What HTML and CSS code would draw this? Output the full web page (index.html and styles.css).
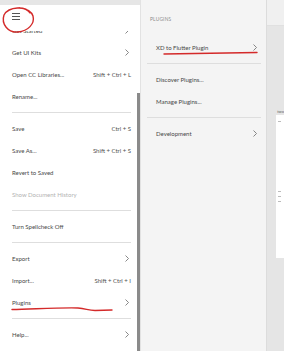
FILE: index.html
```html
<!DOCTYPE html>
<html lang="en">
<head>
    <meta charset="UTF-8">
    <meta name="viewport" content="width=device-width, initial-scale=1.0">
    <title>XD Menu - Plugins</title>
    <link rel="stylesheet" href="styles.css">
</head>
<body>

    <div class="menu">
        <div class="menu-strip"></div>
        <div class="menu-body">
            <div class="menu-main">
                <div class="menu-head">
                    <span class="burger"><i></i><i></i><i></i></span>
                </div>
                <div class="menu-list">
                    <div class="menu-items">
                        <div class="item"><span>Get Started</span><svg class="chev" viewBox="0 0 4 7"><polyline points="0.5,0.5 3.5,3.5 0.5,6.5"/></svg></div>
                        <div class="item"><span>Get UI Kits</span><svg class="chev" viewBox="0 0 4 7"><polyline points="0.5,0.5 3.5,3.5 0.5,6.5"/></svg></div>
                        <div class="item"><span>Open CC Libraries...</span><span class="keys">Shift + Ctrl + L</span></div>
                        <div class="item"><span>Rename...</span></div>
                        <div class="sep"></div>
                        <div class="item"><span>Save</span><span class="keys">Ctrl + S</span></div>
                        <div class="item"><span>Save As...</span><span class="keys">Shift + Ctrl + S</span></div>
                        <div class="item"><span>Revert to Saved</span></div>
                        <div class="item disabled"><span>Show Document History</span></div>
                        <div class="sep"></div>
                        <div class="item"><span>Turn Spellcheck Off</span></div>
                        <div class="sep"></div>
                        <div class="item"><span>Export</span><svg class="chev" viewBox="0 0 4 7"><polyline points="0.5,0.5 3.5,3.5 0.5,6.5"/></svg></div>
                        <div class="item"><span>Import...</span><span class="keys">Shift + Ctrl + I</span></div>
                        <div class="item"><span>Plugins</span><svg class="chev" viewBox="0 0 4 7"><polyline points="0.5,0.5 3.5,3.5 0.5,6.5"/></svg></div>
                        <div class="sep"></div>
                        <div class="item"><span>Help...</span><svg class="chev" viewBox="0 0 4 7"><polyline points="0.5,0.5 3.5,3.5 0.5,6.5"/></svg></div>
                    </div>
                </div>
            </div>
            <div class="menu-track"><div class="thumb"></div></div>
        </div>
    </div>

    <div class="submenu">
        <div class="sub-title">PLUGINS</div>
        <div class="item"><span>XD to Flutter Plugin</span><svg class="chev" viewBox="0 0 4 7"><polyline points="0.5,0.5 3.5,3.5 0.5,6.5"/></svg></div>
        <div class="sep"></div>
        <div class="item"><span>Discover Plugins...</span></div>
        <div class="item"><span>Manage Plugins...</span></div>
        <div class="sep"></div>
        <div class="item"><span>Development</span><svg class="chev" viewBox="0 0 4 7"><polyline points="0.5,0.5 3.5,3.5 0.5,6.5"/></svg></div>
    </div>

    <div class="stage">
        <div class="stage-bar"></div>
        <div class="artboard-label">two</div>
        <div class="artboard">
            <i class="mark m1"></i>
            <i class="mark m2"></i>
            <i class="mark m3"></i>
            <i class="mark m4"></i>
        </div>
    </div>

    <!-- red pen annotations drawn over the screenshot -->
    <svg class="ink" viewBox="0 0 284 351">
        <path d="M30 13 C26 6, 9 6, 4 15 C1 24, 8 33, 18 32 C28 31, 35 24, 33 16 C32 12, 27 8, 19 8"/>
        <path d="M12 309.5 C35 309, 60 307.5, 78 308 C86 308.5, 88 310.5, 95 310.5 L112 310"/>
        <path d="M164 54 C200 53.5, 230 53, 257 52.5"/>
    </svg>

</body>
</html>
```

FILE: styles.css
```css
body {
    margin: 0;
    width: 284px;
    height: 351px;
    overflow: hidden;
    display: flex;
    font-family: Lato, "Liberation Sans", sans-serif;
    font-size: 6px;
    color: #484848;
    background-color: #e5e5e5;
}
.menu {
    width: 146px;
    display: flex;
    flex-direction: column;
    background-color: #fff;
}
.menu-strip {
    height: 5px;
    background-color: #e6e6e6;
}
.menu-body {
    flex: 1;
    display: flex;
    min-height: 0;
}
.menu-main {
    flex: 1;
    display: flex;
    flex-direction: column;
    min-width: 0;
}
.menu-head {
    height: 26px;
    padding: 0 0 4px 12px;
    box-sizing: border-box;
    display: flex;
    align-items: center;
}
.burger {
    display: flex;
    flex-direction: column;
    gap: 2px;
    width: 8px;
}
.burger i {
    height: 1px;
    background-color: #555;
}
.menu-list {
    flex: 1;
    overflow: hidden;
}
.menu-items {
    margin-top: -12px;
    padding: 0 6px 0 12px;
}
.menu-track {
    width: 3px;
    padding-top: 88px;
}
.thumb {
    height: 100%;
    background-color: #8a8a8a;
}
.item {
    height: 22px;
    display: flex;
    align-items: center;
    justify-content: space-between;
    white-space: nowrap;
}
.item.disabled {
    color: #b3b3b3;
}
.keys {
    color: #505050;
}
.chev {
    width: 4px;
    height: 7px;
    margin-right: 2px;
    fill: none;
    stroke: #6a6a6a;
    stroke-width: 0.8;
}
.sep {
    height: 10px;
    display: flex;
    align-items: center;
}
.sep::before {
    content: "";
    flex: 1;
    height: 1px;
    background-color: #dedede;
}
.submenu {
    width: 119px;
    background-color: #f4f4f4;
    border-left: 1px solid #e2e2e2;
    padding: 0 5px 0 6px;
}
.sub-title {
    height: 36px;
    padding: 16px 0 0 3px;
    box-sizing: border-box;
    font-size: 4.8px;
    color: #8c8c8c;
    letter-spacing: 0.2px;
}
.submenu .item {
    padding: 0 2px 0 9px;
}
.stage {
    flex: 1;
    border-left: 1px solid #dcdcdc;
    display: flex;
    flex-direction: column;
}
.stage-bar {
    height: 25px;
    background-color: #f0f0f0;
    border-bottom: 1px solid #e0e0e0;
}
.artboard-label {
    margin: 83px 0 0 10px;
    height: 6px;
    font-size: 4px;
    color: #666;
}
.artboard {
    margin-left: 9px;
    height: 143px;
    background-color: #fff;
    position: relative;
}
.mark {
    position: absolute;
    left: 2px;
    width: 3px;
    height: 1px;
    background-color: #bbb;
}
.m1 { top: 6px; }
.m2 { top: 76px; }
.m3 { top: 81px; }
.m4 { top: 86px; }
.ink {
    position: absolute;
    left: 0;
    top: 0;
    width: 284px;
    height: 351px;
    fill: none;
    stroke: #d42a2a;
    stroke-width: 1.4;
    stroke-linecap: round;
}
```
